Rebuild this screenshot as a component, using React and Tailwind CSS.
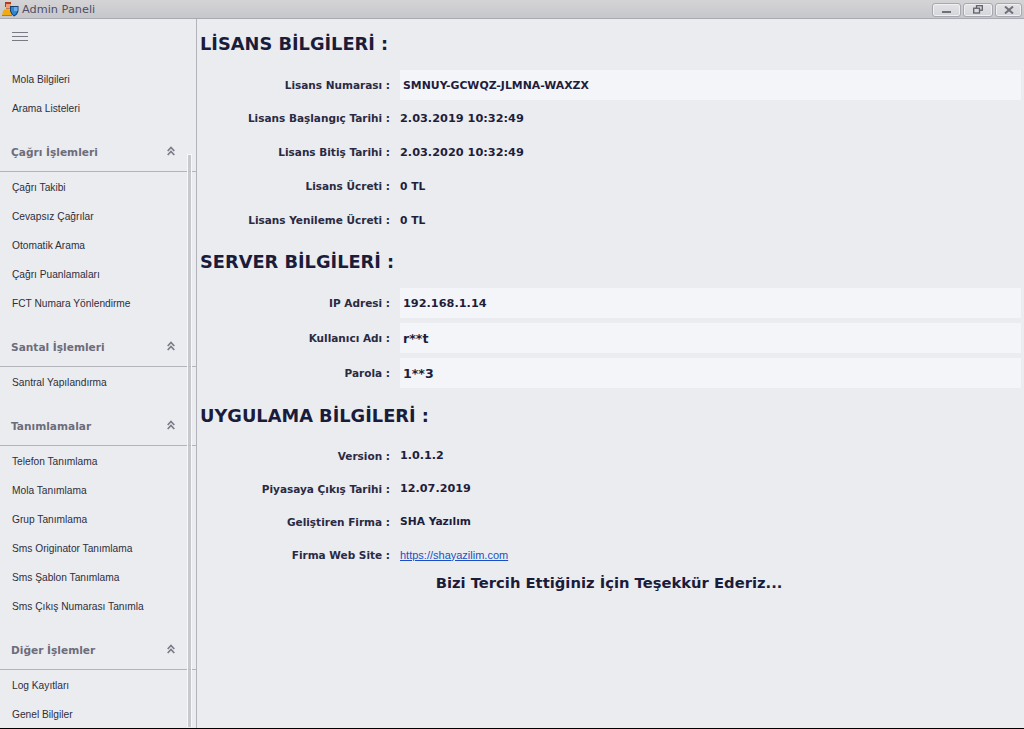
import React from 'react';

const ChevronsUp = () => (
    <svg width="8" height="10" viewBox="0 0 8 10" fill="none" stroke="#7b7c88" strokeWidth="1.7">
        <path d="M0.7 5 4 1.5 7.3 5" />
        <path d="M0.7 9 4 5.5 7.3 9" />
    </svg>
);

const AppIcon = () => (
    <svg width="17" height="15" viewBox="0 0 17 15">
        <rect x="3" y="0" width="6" height="2" fill="#b5391c" />
        <rect x="3" y="2" width="1" height="3" fill="#b5391c" />
        <rect x="4" y="2" width="5" height="4" fill="#eaa274" />
        <rect x="4" y="6" width="4" height="1" fill="#c87a4c" />
        <path d="M0 14 L1 9 Q2 7 5 7 Q8 7 9 9 L10 14 Z" fill="#f2aa14" />
        <rect x="0" y="13" width="10" height="1" fill="#c87808" />
        <path d="M8 4 H16.5 V9 Q15.5 13 12 14.5 Q9 13 8 9 Z" fill="#173e70" />
        <path d="M9 5 H15.5 V9 Q14.5 12 12 13.2 Q10 12 9 9 Z" fill="#2f86d2" />
        <rect x="12" y="5" width="3.5" height="4" fill="#67b2ec" />
    </svg>
);

const WinButton = ({ children, className }) => (
    <div className={`h-[14px] flex items-center justify-center rounded-[3px] border border-[#a6a7af] bg-gradient-to-b from-[#e3e3e6] to-[#d4d5da] shadow-[inset_0_0_0_1px_#f0f0f2] ${className}`}>
        {children}
    </div>
);

const TitleBar = () => (
    <div className="h-[19px] shrink-0 flex items-center justify-between bg-gradient-to-b from-[#d4d4d6] to-[#c6c7cb] border-b border-[#a9aab1]">
        <div className="flex items-center pl-[2px]">
            <AppIcon />
            <span className="ml-[3px] mt-[2px] font-['DejaVu_Sans',sans-serif] text-[11.3px] font-medium text-[#4e4e68] leading-none">Admin Paneli</span>
        </div>
        <div className="flex items-center gap-[2px] pr-[2px] pt-px">
            <WinButton className="w-[29px]">
                <div className="w-[9px] h-[2px] mt-[5px] bg-[#6f7079]"></div>
            </WinButton>
            <WinButton className="w-[30px]">
                <svg width="10" height="9" viewBox="0 0 10 9" fill="none" stroke="#5f6069" strokeWidth="1.3">
                    <rect x="3.5" y="0.7" width="5.8" height="4.5" />
                    <rect x="0.7" y="3.2" width="5.8" height="4.8" fill="#dcdce0" />
                </svg>
            </WinButton>
            <WinButton className="w-[27px]">
                <svg width="10" height="8" viewBox="0 0 10 8" stroke="#6f7079" strokeWidth="2">
                    <path d="M1 0.5 9 7.5M9 0.5 1 7.5" />
                </svg>
            </WinButton>
        </div>
    </div>
);

const MenuItem = ({ label }) => (
    <div className="h-[29px] flex items-center pl-[12px] font-['Liberation_Sans',sans-serif] text-[10.2px] text-[#2e2e3a]">{label}</div>
);

const MenuGroup = ({ title, items }) => (
    <div>
        <div className="h-[49px] flex items-end justify-between border-b border-[#b3b4bb] pb-[10px] pl-[11px] pr-[21px]">
            <span className="font-['DejaVu_Sans',sans-serif] text-[10.6px] font-bold text-[#6d6d7a] leading-[18px]">{title}</span>
            <span className="mb-[5px]"><ChevronsUp /></span>
        </div>
        <div className="pt-px">
            {items.map((label) => <MenuItem key={label} label={label} />)}
        </div>
    </div>
);

const Sidebar = () => (
    <aside className="relative w-[197px] shrink-0 border-r border-[#b3b4bb] overflow-hidden">
        <div className="h-[46px] pl-[12px] pt-[13px] flex flex-col gap-[3px]">
            <div className="w-[16px] h-px bg-[#7a7a84]"></div>
            <div className="w-[16px] h-px bg-[#7a7a84]"></div>
            <div className="w-[16px] h-px bg-[#7a7a84]"></div>
        </div>
        <MenuItem label="Mola Bilgileri" />
        <MenuItem label="Arama Listeleri" />
        <MenuGroup title="Çağrı İşlemleri" items={['Çağrı Takibi', 'Cevapsız Çağrılar', 'Otomatik Arama', 'Çağrı Puanlamaları', 'FCT Numara Yönlendirme']} />
        <MenuGroup title="Santal İşlemleri" items={['Santral Yapılandırma']} />
        <MenuGroup title="Tanımlamalar" items={['Telefon Tanımlama', 'Mola Tanımlama', 'Grup Tanımlama', 'Sms Originator Tanımlama', 'Sms Şablon Tanımlama', 'Sms Çıkış Numarası Tanımla']} />
        <MenuGroup title="Diğer İşlemler" items={['Log Kayıtları', 'Genel Bilgiler']} />
        {/* scrollbar */}
        <div className="absolute left-[187px] top-[135px] bottom-[1px] w-[5px] bg-[#bfc0c3]/80 border border-[#f8f8fa] border-b-0"></div>
    </aside>
);

const Heading = ({ children }) => (
    <h2 className="h-[48px] flex items-center pt-[2px] pl-[3px] text-[17.8px] font-bold text-[#1b1b3a]">{children}</h2>
);

const Label = ({ children }) => (
    <div className="w-[193px] text-right text-[10.5px] leading-[14px] font-bold text-[#2a2a42]">{children} :</div>
);

const Row = ({ label, children, size = 'text-[10.7px]', height = 'h-[34px]' }) => (
    <div className={`flex items-center ${height}`}>
        <Label>{label}</Label>
        <div className={`ml-[10px] pt-px leading-[14px] font-bold text-[#1e1e3c] ${size}`}>{children}</div>
    </div>
);

const BoxRow = ({ label, children, size = 'text-[10.7px]' }) => (
    <div className="flex items-center h-[30px]">
        <Label>{label}</Label>
        <div className={`ml-[10px] flex-1 h-full flex items-center pt-px pl-[3px] bg-[#f4f5f8] leading-[14px] font-bold text-[#1e1e3c] ${size}`}>{children}</div>
    </div>
);

export default function App() {
    return (
        <div className="w-[1024px] h-[729px] flex flex-col overflow-hidden bg-[#ebecf0] border-b border-black font-['DejaVu_Sans',sans-serif]">
            <TitleBar />
            <div className="flex-1 flex min-h-0">
                <Sidebar />
                <main className="flex-1 pr-[3px]">
                    <Heading>LİSANS BİLGİLERİ :</Heading>
                    <div className="mt-[3px] mb-px">
                        <BoxRow label="Lisans Numarası" size="text-[10.9px]">SMNUY-GCWQZ-JLMNA-WAXZX</BoxRow>
                    </div>
                    <Row label="Lisans Başlangıç Tarihi" size="text-[11.3px]">2.03.2019 10:32:49</Row>
                    <Row label="Lisans Bitiş Tarihi" size="text-[11.3px]">2.03.2020 10:32:49</Row>
                    <Row label="Lisans Ücreti">0 TL</Row>
                    <Row label="Lisans Yenileme Ücreti">0 TL</Row>
                    <Heading>SERVER BİLGİLERİ :</Heading>
                    <div className="mt-[3px] flex flex-col gap-[5px]">
                        <BoxRow label="IP Adresi" size="text-[11.3px]">192.168.1.14</BoxRow>
                        <BoxRow label="Kullanıcı Adı" size="text-[12.6px]">r**t</BoxRow>
                        <BoxRow label="Parola" size="text-[12.6px]">1**3</BoxRow>
                    </div>
                    <div className="mt-[3px]"><Heading>UYGULAMA BİLGİLERİ :</Heading></div>
                    <Row height="h-[33px]" label="Version" size="text-[11.2px]">1.0.1.2</Row>
                    <Row height="h-[33px]" label="Piyasaya Çıkış Tarihi" size="text-[11.2px]">12.07.2019</Row>
                    <Row height="h-[33px]" label="Geliştiren Firma">SHA Yazılım</Row>
                    <Row height="h-[33px]" label="Firma Web Site">
                        <a href="#site" className="font-['Liberation_Sans',sans-serif] text-[11px] font-normal text-[#1a4fc4] underline">https://shayazilim.com</a>
                    </Row>
                    <div className="h-[24px] flex items-center justify-center text-[14.75px] font-bold text-[#1b1b3a]">
                        Bizi Tercih Ettiğiniz İçin Teşekkür Ederiz...
                    </div>
                </main>
            </div>
        </div>
    );
}
